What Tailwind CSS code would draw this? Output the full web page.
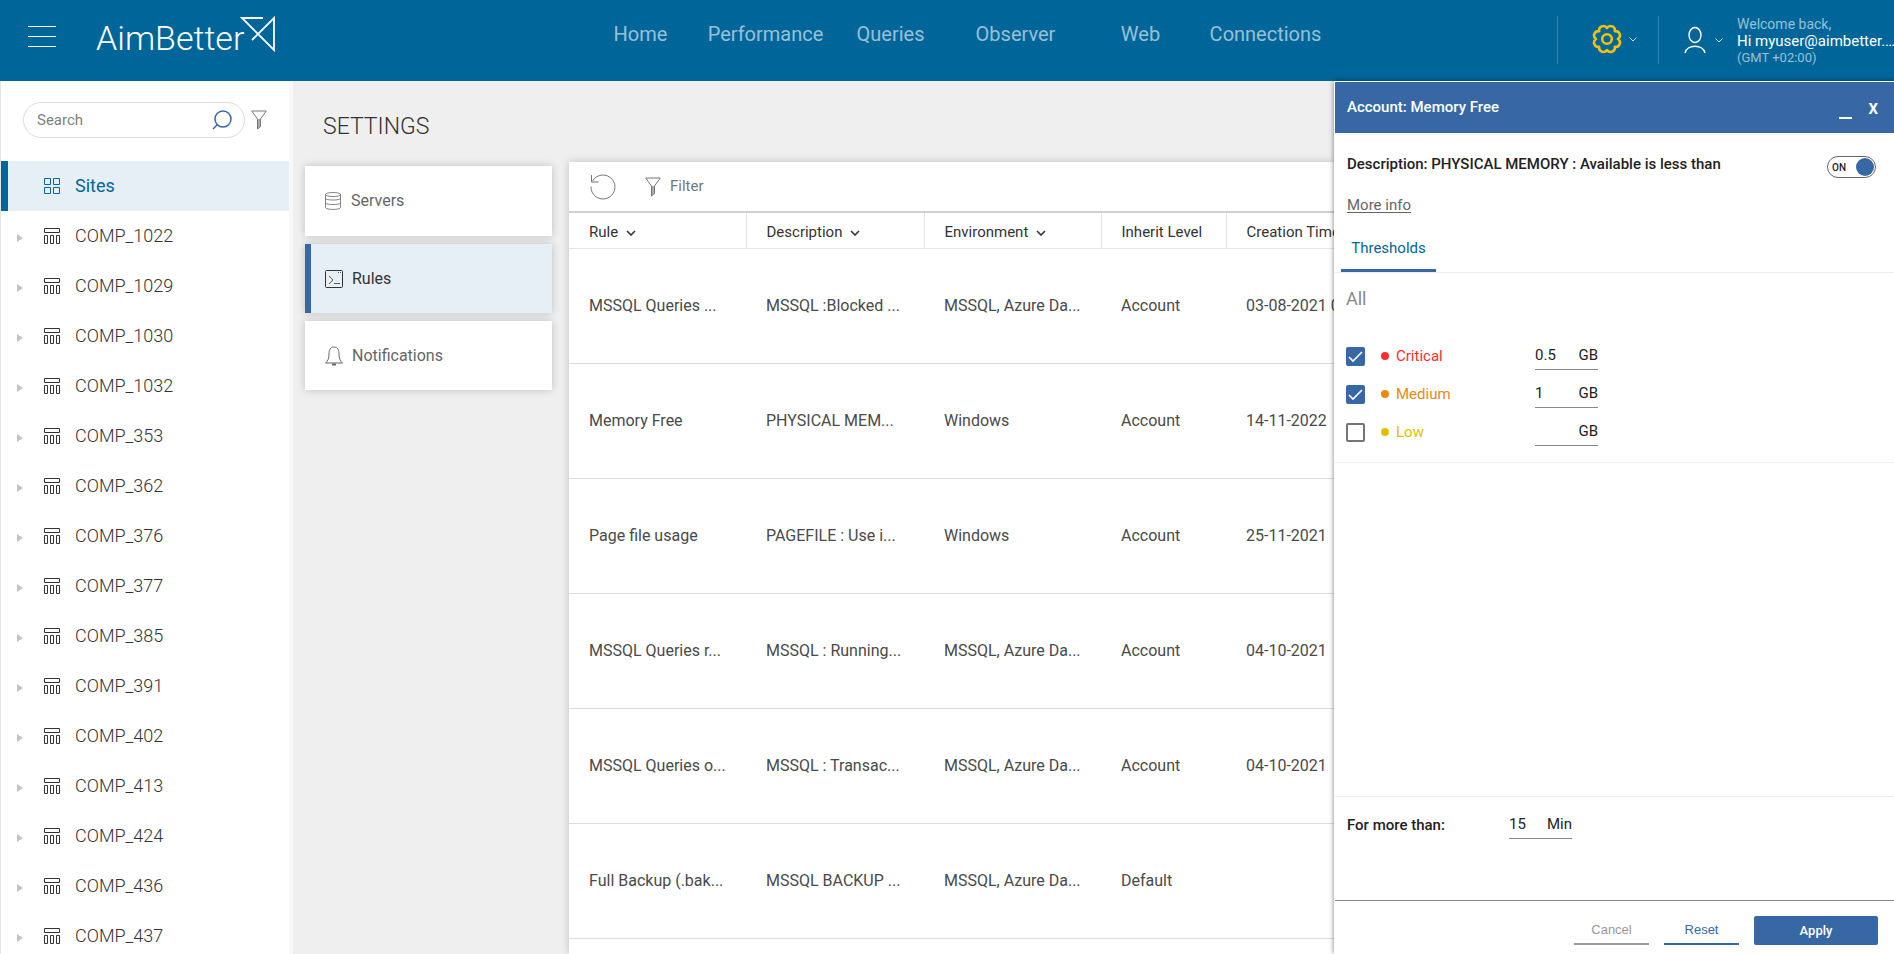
<!DOCTYPE html>
<html lang="en">
<head>
    <meta charset="UTF-8">
    <meta name="viewport" content="width=device-width, initial-scale=1.0">
    <title>AimBetter - Settings</title>
    <script src="https://cdn.jsdelivr.net/npm/@tailwindcss/browser@4"></script>
</head>
<body class="flex h-screen flex-col overflow-hidden bg-[#efefef] font-['Roboto','Liberation_Sans',sans-serif] text-[#4a4a4a]">
    <!-- Shared icons -->
    <svg class="hidden" aria-hidden="true">
        <symbol id="icon-company" viewBox="0 0 16 16">
            <path d="M.5.5h15v4H.5zM.5 7.5h3v8h-3zM6.5 7.5h3v8h-3zM12.5 7.5h3v8h-3z" fill="none" stroke="currentColor"/>
        </symbol>
        <symbol id="icon-filter" viewBox="0 0 16 20">
            <path d="M.7 1h14.6L9.5 9v7.5L6.5 19V9z" fill="none" stroke="currentColor"/>
            <path d="M6.5 9h3v7.5L6.5 19z" fill="currentColor" opacity=".6"/>
        </symbol>
        <symbol id="icon-chevron" viewBox="0 0 10 6">
            <path d="M1 1l4 4 4-4" fill="none" stroke="currentColor" stroke-width="1.6"/>
        </symbol>
        <symbol id="icon-chevron-thin" viewBox="0 0 8 5">
            <path d="M.5.5L4 4l3.5-3.5" fill="none" stroke="currentColor" stroke-width=".8"/>
        </symbol>
    </svg>

    <!-- Top bar -->
    <header class="flex h-[81px] shrink-0 bg-[#006699] text-white">
        <div class="flex flex-1 items-start">
            <button type="button" aria-label="Menu" class="mt-[26px] ml-7 flex w-7 flex-col gap-[9px]">
                <span class="h-px w-full bg-white"></span>
                <span class="h-px w-full bg-white"></span>
                <span class="h-px w-full bg-white"></span>
            </button>
            <a href="#" class="mt-4 ml-10 flex">
                <span class="mt-[2px] text-[34px] leading-10 font-light">AimBetter</span>
                <svg class="-ml-1 h-9 w-9" viewBox="0 0 36 36" fill="none" stroke="#fff" stroke-width="1.8"><path d="M23 2H2l32 32V2L12 24"/></svg>
            </a>
        </div>
        <nav class="ml-3 flex items-start pt-5 text-xl leading-7 text-white/60">
            <a href="#" class="w-[125px] text-center">Home</a>
            <a href="#" class="w-[125px] text-center">Performance</a>
            <a href="#" class="w-[125px] text-center">Queries</a>
            <a href="#" class="w-[125px] text-center">Observer</a>
            <a href="#" class="w-[125px] text-center">Web</a>
            <a href="#" class="w-[125px] text-center">Connections</a>
        </nav>
        <div class="flex flex-1 items-start justify-end pt-4">
            <button type="button" aria-label="Settings" class="flex h-12 w-[101px] items-center gap-[7px] border-l border-white/20 pb-[2px] pl-[34px]">
                <svg class="h-[30px] w-[30px]" viewBox="0 0 30 30" fill="none" stroke="#f4c20d" stroke-width="2.6" stroke-linejoin="round">
                    <path d="M15 4A4.3 4.3 0 0 1 22.8 7.2A4.3 4.3 0 0 1 26 15A4.3 4.3 0 0 1 22.8 22.8A4.3 4.3 0 0 1 15 26A4.3 4.3 0 0 1 7.2 22.8A4.3 4.3 0 0 1 4 15A4.3 4.3 0 0 1 7.2 7.2A4.3 4.3 0 0 1 15 4z"/>
                    <circle cx="15" cy="15" r="4.8"/>
                </svg>
                <svg class="h-[5px] w-2"><use href="#icon-chevron-thin"/></svg>
            </button>
            <button type="button" aria-label="User menu" class="flex h-12 w-[79px] items-center gap-[9px] border-l border-white/20 pl-[25px]">
                <svg class="h-[28px] w-[22px]" viewBox="0 0 22 28" fill="none" stroke="#fff" stroke-width="1.4"><ellipse cx="11" cy="9" rx="6" ry="7.5"/><path d="M1 27c2-9 18-9 20 0"/></svg>
                <svg class="h-[5px] w-2"><use href="#icon-chevron-thin"/></svg>
            </button>
            <div class="w-[157px] text-sm leading-[17px] whitespace-nowrap text-white/60">
                <p>Welcome back,</p>
                <p class="text-[15px] leading-[17px] text-white">Hi myuser@aimbetter.…</p>
                <p class="text-[13px] leading-4">(GMT +02:00)</p>
            </div>
        </div>
    </header>

    <div class="flex min-h-0 flex-1">
        <!-- Sites tree -->
        <aside class="w-[293px] shrink-0 overflow-hidden border-r-4 border-l border-r-[#f8f8f8] border-l-[#e5e5e5] bg-white">
            <div class="flex items-center pt-[21px] pb-[23px] pl-[22px]">
                <label class="flex h-9 w-[222px] items-center rounded-full border border-[#dcdcdc] pr-3 pl-[13px]">
                    <input type="text" placeholder="Search" aria-label="Search" class="min-w-0 flex-1 text-[15px] outline-none placeholder:text-[#808080]">
                    <svg class="h-5 w-5" viewBox="0 0 20 20" fill="none" stroke="#3768a5" stroke-width="1.5"><circle cx="11" cy="9" r="8"/><path d="M5.5 14.5L1 19"/></svg>
                </label>
                <button type="button" aria-label="Filter sites" class="ml-[6px] text-[#777]"><svg class="h-5 w-4"><use href="#icon-filter"/></svg></button>
            </div>
            <a href="#" class="flex h-[50px] items-center border-l-[7px] border-[#006699] bg-[#e6eff5] pl-9 text-lg text-[#006699]">
                <svg class="mr-[15px] h-4 w-4" viewBox="0 0 16 16" fill="none" stroke="currentColor"><path d="M.5.5h6v6h-6zM9.5.5h6v6h-6zM.5 9.5h6v6h-6zM9.5 9.5h6v6h-6z"/></svg>
                Sites
            </a>
            <ul id="sites"></ul>
        </aside>

        <!-- Settings -->
        <main class="flex min-w-0 flex-1 flex-col">
            <h1 class="pt-[30px] pb-[19px] pl-[30px] text-[23px] leading-8 font-light text-[#333]">SETTINGS</h1>
            <div class="flex min-h-0 flex-1 gap-[17px] pl-3">
                <nav class="flex w-[247px] shrink-0 flex-col gap-2 pt-1 text-[#666]">
                    <a href="#" class="flex h-[70px] items-center gap-[10px] bg-white pl-5 shadow-[0_0_8px_rgba(0,0,0,0.2)]">
                        <svg class="h-[18px] w-4" viewBox="0 0 16 18" fill="none" stroke="currentColor" stroke-width=".8"><ellipse cx="8" cy="2.5" rx="7.5" ry="2"/><path d="M.5 2.5v13c0 2.6 15 2.6 15 0v-13M.5 6.5c0 2 15 2 15 0M.5 11c0 2 15 2 15 0"/></svg>
                        Servers
                    </a>
                    <a href="#" class="flex h-[69px] items-center gap-[9px] border-l-[6px] border-[#3768a5] bg-[#e6eff5] pl-[14px] text-[#333] shadow-[0_0_8px_rgba(0,0,0,0.2)]">
                        <svg class="h-[18px] w-[18px]" viewBox="0 0 18 18" fill="none" stroke="currentColor"><rect x=".5" y=".5" width="17" height="17" rx="1"/><path d="M4 6l4 4-4 4M9 13.5h6M13 2.5h1M15 2.5h1" stroke-width=".8"/></svg>
                        Rules
                    </a>
                    <a href="#" class="flex h-[69px] items-center gap-[9px] bg-white pl-5 shadow-[0_0_8px_rgba(0,0,0,0.2)]">
                        <svg class="h-5 w-[18px]" viewBox="0 0 18 20" fill="none" stroke="currentColor"><path d="M9 1C5 1 4 4.5 4 8c0 4-1 7-3.5 9h17C15 15 14 12 14 8c0-3.5-1-7-5-7z"/><path d="M7 18.5h4" stroke-width="2"/></svg>
                        Notifications
                    </a>
                </nav>

                <section class="min-w-0 flex-1 overflow-hidden bg-white shadow-[0_0_8px_rgba(0,0,0,0.2)]">
                    <div class="flex h-[51px] items-center border-b-2 border-[#d0d0d0] pl-[21px] text-[#777]">
                        <button type="button" aria-label="Refresh"><svg class="h-[26px] w-[26px]" viewBox="0 0 26 26" fill="none" stroke="currentColor"><path d="M1 12.5a12 12 0 1 0 1.6-5.5M1.5 1v7h7"/></svg></button>
                        <button type="button" class="ml-[29px] flex items-center gap-[9px] text-[15px]"><svg class="h-5 w-4"><use href="#icon-filter"/></svg>Filter</button>
                    </div>
                    <table class="w-[1325px] table-fixed border-collapse text-left">
                        <thead class="text-[15px] text-[#333]">
                            <tr class="h-[35px] border-b border-[#e5e5e5]">
                                <th class="w-[177px] border-r border-[#e5e5e5] pt-1 pl-5 font-normal">Rule <svg class="ml-1 inline h-[6px] w-[10px]"><use href="#icon-chevron"/></svg></th>
                                <th class="w-[178px] border-r border-[#e5e5e5] pt-1 pl-5 font-normal">Description <svg class="ml-1 inline h-[6px] w-[10px]"><use href="#icon-chevron"/></svg></th>
                                <th class="w-[177px] border-r border-[#e5e5e5] pt-1 pl-5 font-normal">Environment <svg class="ml-1 inline h-[6px] w-[10px]"><use href="#icon-chevron"/></svg></th>
                                <th class="w-[125px] border-r border-[#e5e5e5] pt-1 pl-5 font-normal">Inherit Level</th>
                                <th class="pt-1 pl-5 font-normal">Creation Time</th>
                            </tr>
                        </thead>
                        <tbody id="rules"></tbody>
                    </table>
                </section>
            </div>
        </main>

        <!-- Rule editor -->
        <aside class="z-10 flex w-[560px] shrink-0 flex-col border-t border-l border-white bg-white text-[15px] text-[#222] shadow-[0_0_5px_rgba(0,0,0,0.5)]">
            <div class="flex h-[51px] shrink-0 items-center bg-[#3768a5] pr-4 pl-3 font-medium text-white">
                <h2 class="flex-1">Account: Memory Free</h2>
                <button type="button" aria-label="Minimize" class="mt-1 mr-4 h-[18px] w-[13px] border-b-2 border-white"></button>
                <button type="button" aria-label="Close" class="pt-1 font-bold">X</button>
            </div>
            <div class="flex items-start pt-5 pr-[18px] pl-3">
                <p class="flex-1 font-medium">Description: PHYSICAL MEMORY : Available is less than</p>
                <label class="mt-[3px] flex h-[22px] w-[49px] items-center justify-between rounded-full border border-[#666] pr-[1px] pl-1 text-[10px] font-medium">
                    ON
                    <input type="checkbox" checked class="h-[18px] w-[18px] appearance-none rounded-full bg-[#3768a5]">
                </label>
            </div>
            <p class="pt-[15px] pl-3 leading-6"><a href="#" class="text-[#666] underline underline-offset-2">More info</a></p>
            <div class="flex border-b border-[#ececec] pt-[11px] pl-[6px]">
                <button type="button" class="h-11 w-[95px] border-b-[3px] border-[#3768a5] text-[#006699]">Thresholds</button>
            </div>
            <div class="border-b border-[#ececec] pt-3 pb-[11px] pl-[11px]">
                <h3 class="mb-6 text-lg leading-7 text-[#888]">All</h3>
                <div id="thresholds"></div>
            </div>
            <div class="mt-auto flex h-[104px] shrink-0 items-start border-t border-[#ececec] pt-[14px] pl-3">
                <label for="duration" class="w-[162px] leading-7 font-medium">For more than:</label>
                <div class="flex h-7 w-[63px] items-center justify-between border-b border-[#888]">
                    <input id="duration" type="text" value="15" class="w-8 min-w-0 outline-none"><span>Min</span>
                </div>
            </div>
            <div class="flex h-[54px] shrink-0 justify-end gap-[15px] border-t border-[#888] pt-[15px] pr-4 font-['Liberation_Sans',sans-serif] text-[13px]">
                <button type="button" class="h-[29px] w-[75px] border-b-2 border-[#999] text-[#999]">Cancel</button>
                <button type="button" class="h-[29px] w-[75px] border-b-2 border-[#3768a5] text-[#3768a5]">Reset</button>
                <button type="button" class="h-[29px] w-[124px] rounded-[2px] bg-[#3768a5] font-['Roboto',sans-serif] font-medium text-white">Apply</button>
            </div>
        </aside>
    </div>

    <script>
        const sites = ["1022", "1029", "1030", "1032", "353", "362", "376", "377", "385", "391", "402", "413", "424", "436", "437"];
        document.getElementById("sites").innerHTML = sites.map(id => `
            <li class="flex h-[50px] items-center pl-4 text-lg font-light text-[#333]">
                <button type="button" aria-label="Expand COMP_${id}" class="mt-1 mr-[21px] h-0 w-0 border-y-4 border-l-[6px] border-y-transparent border-l-[#c4c4c4]"></button>
                <svg class="mr-[15px] h-4 w-4"><use href="#icon-company"/></svg>
                <a href="#">COMP_${id}</a>
            </li>`).join("");

        const rules = [
            ["MSSQL Queries ...", "MSSQL :Blocked ...", "MSSQL, Azure Da...", "Account", "03-08-2021 09:12"],
            ["Memory Free", "PHYSICAL MEM...", "Windows", "Account", "14-11-2022"],
            ["Page file usage", "PAGEFILE : Use i...", "Windows", "Account", "25-11-2021"],
            ["MSSQL Queries r...", "MSSQL : Running...", "MSSQL, Azure Da...", "Account", "04-10-2021"],
            ["MSSQL Queries o...", "MSSQL : Transac...", "MSSQL, Azure Da...", "Account", "04-10-2021"],
            ["Full Backup (.bak...", "MSSQL BACKUP ...", "MSSQL, Azure Da...", "Default", ""]
        ];
        document.getElementById("rules").innerHTML = rules.map(row => `
            <tr class="h-[115px] border-b border-[#dcdcdc]">${row.map(cell => `<td class="pl-5 whitespace-nowrap">${cell}</td>`).join("")}</tr>`).join("");

        const thresholds = [
            { name: "Critical", value: "0.5", checked: "checked", color: "text-[#ff2d2d]" },
            { name: "Medium", value: "1", checked: "checked", color: "text-[#e88a10]" },
            { name: "Low", value: "", checked: "", color: "text-[#dfc000]" }
        ];
        document.getElementById("thresholds").innerHTML = thresholds.map(t => `
            <div class="flex h-[38px] items-center">
                <span class="grid">
                    <input id="${t.name}" type="checkbox" ${t.checked} class="peer col-start-1 row-start-1 h-[19px] w-[19px] appearance-none rounded-[2px] border-2 border-[#757575] checked:border-[#3768a5] checked:bg-[#3768a5]">
                    <svg class="pointer-events-none invisible col-start-1 row-start-1 h-[19px] w-[19px] peer-checked:visible" viewBox="0 0 19 19" fill="none" stroke="#fff" stroke-width="1.6"><path d="M3 10l4 4 9-9"/></svg>
                </span>
                <label for="${t.name}" class="flex w-[170px] items-center gap-[7px] pl-4 ${t.color}"><span class="h-2 w-2 rounded-full bg-current"></span>${t.name}</label>
                <div class="flex h-7 w-[63px] items-center justify-between border-b border-[#888]">
                    <input type="text" value="${t.value}" aria-label="${t.name} value" class="w-8 min-w-0 outline-none"><span>GB</span>
                </div>
            </div>`).join("");
    </script>
</body>
</html>
